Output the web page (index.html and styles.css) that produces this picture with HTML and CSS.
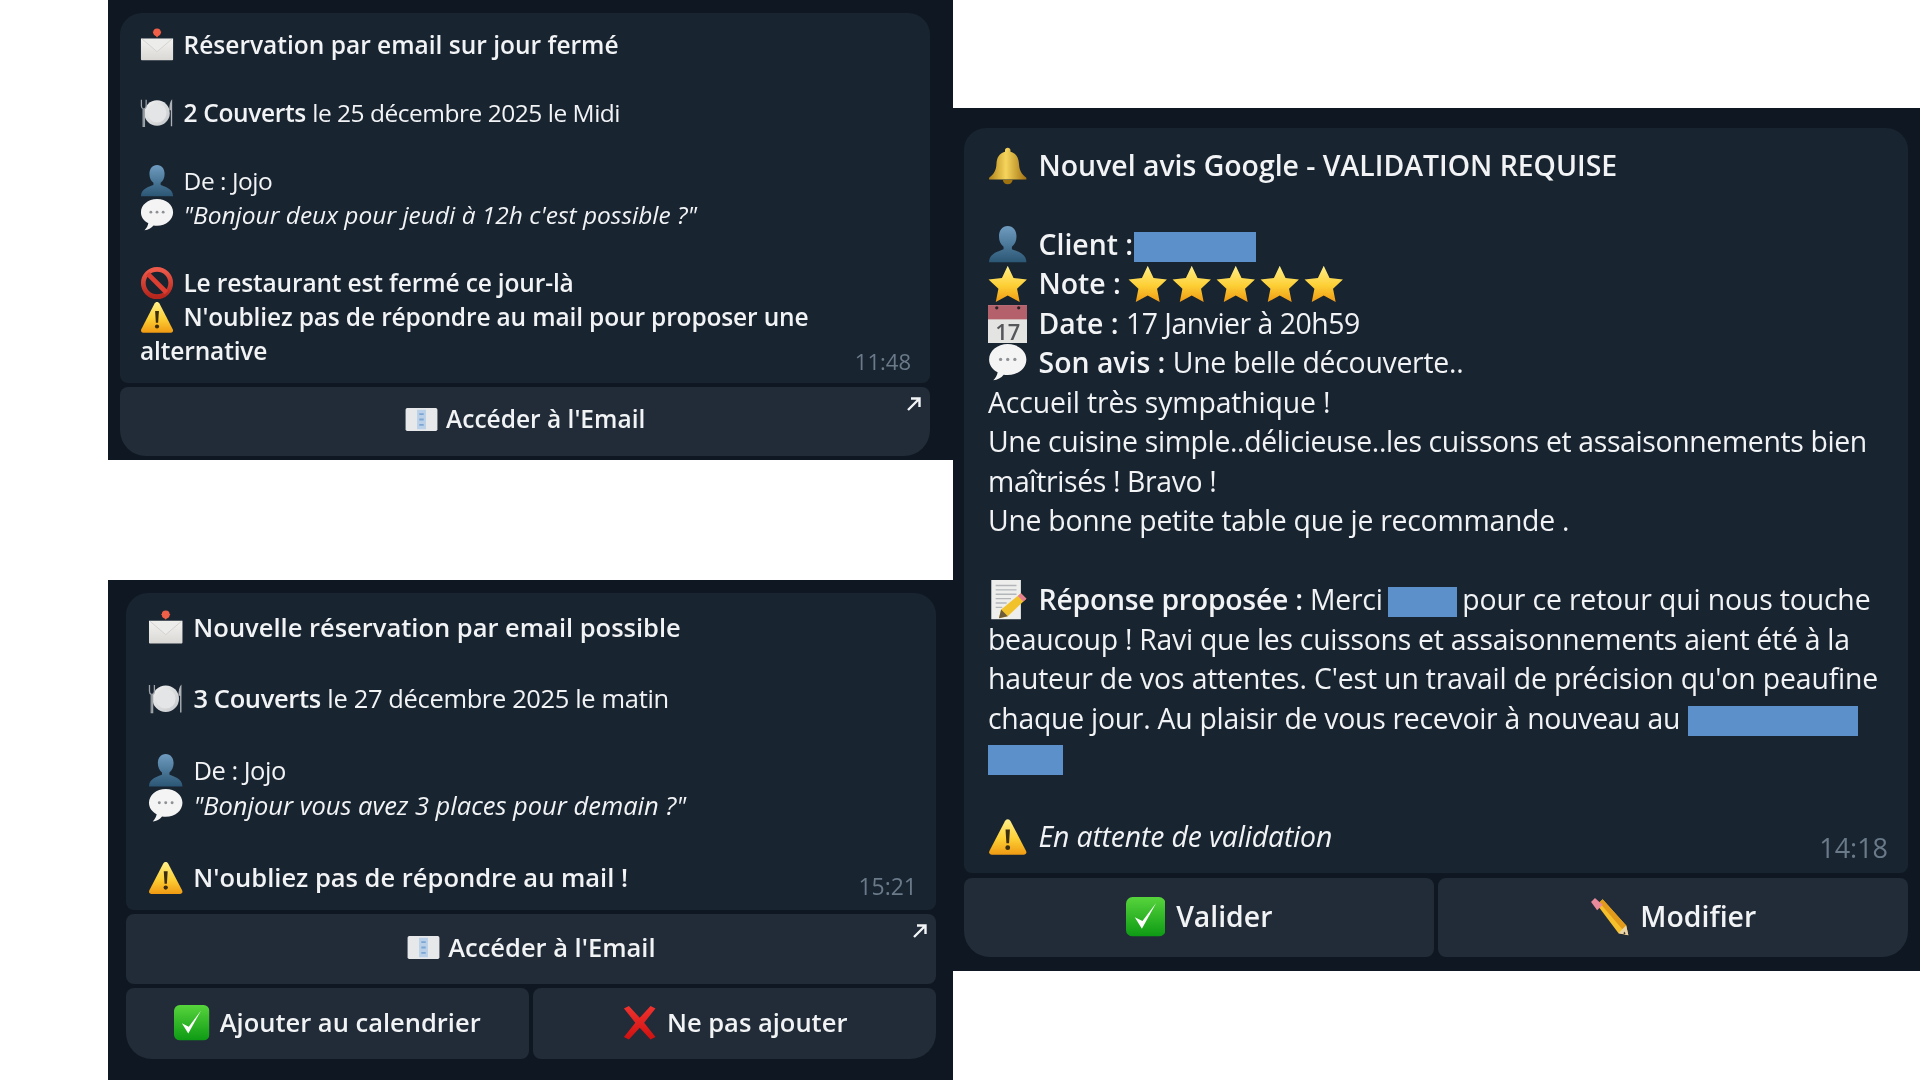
FILE: index.html
```html
<!DOCTYPE html>
<html lang="fr">
<head>
<meta charset="utf-8">
<title>Notifications</title>
<link rel="stylesheet" href="styles.css">
</head>
<body>
<svg class="sprites" width="0" height="0" aria-hidden="true">
  <defs>
    <linearGradient id="gMail" x1="0" y1="0" x2="0" y2="1"><stop offset="0" stop-color="#f3f2f0"/><stop offset="1" stop-color="#d9d8d5"/></linearGradient>
    <linearGradient id="gUser" x1="0" y1="0" x2="0" y2="1"><stop offset="0" stop-color="#6f9cc0"/><stop offset="1" stop-color="#2b5674"/></linearGradient>
    <linearGradient id="gGold" x1="0" y1="0" x2="0" y2="1"><stop offset="0" stop-color="#fff08a"/><stop offset=".55" stop-color="#fdcf35"/><stop offset="1" stop-color="#ef9a12"/></linearGradient>
    <linearGradient id="gBell" x1="0" y1="0" x2="1" y2="0"><stop offset="0" stop-color="#b08218"/><stop offset=".45" stop-color="#f6d55c"/><stop offset="1" stop-color="#a17212"/></linearGradient>
    <linearGradient id="gGreen" x1="0" y1="0" x2="0" y2="1"><stop offset="0" stop-color="#57d43c"/><stop offset="1" stop-color="#0d9a14"/></linearGradient>
    <linearGradient id="gRed" x1="0" y1="0" x2="0" y2="1"><stop offset="0" stop-color="#f0332f"/><stop offset="1" stop-color="#cf1010"/></linearGradient>
    <linearGradient id="gNo" x1="0" y1="0" x2="0" y2="1"><stop offset="0" stop-color="#ee5a4a"/><stop offset="1" stop-color="#b5261d"/></linearGradient>
    <linearGradient id="gPlate" x1="0" y1="0" x2="1" y2="1"><stop offset="0" stop-color="#f2f2f2"/><stop offset="1" stop-color="#c4c7ca"/></linearGradient>

    <symbol id="i-mail" viewBox="0 0 36 36">
      <path d="M1 11h34v22a1 1 0 0 1-1 1H2a1 1 0 0 1-1-1z" fill="url(#gMail)"/>
      <path d="M2 11.500 18 25 34 11.500" fill="#ececea" stroke="#d2d1ce" stroke-width="1"/>
      <path d="M16.500 1h3v3h3.300l-4.800 6L13.200 4h3.300z" fill="#f05f48"/>
      <circle cx="18" cy="4.500" r="4" fill="#f05f48"/>
    </symbol>
    <symbol id="i-plate" viewBox="0 0 36 36">
      <circle cx="18" cy="18" r="13.500" fill="url(#gPlate)"/>
      <circle cx="18" cy="18" r="10" fill="#e4e5e6"/>
      <path d="M1.500 4v6.500c0 1.800 1 2.800 1.800 3V32h1.400V13.500c.8-.3 1.800-1.200 1.800-3V4" fill="none" stroke="#9ea3a8" stroke-width="1.300"/>
      <path d="M34 3.500c-2.200 2-3 6-3 11.500h1.600v17H34z" fill="#aeb2b6"/>
    </symbol>
    <symbol id="i-user" viewBox="0 0 36 36">
      <path d="M18 1c5 0 8 4 8 9.500 0 4-1.600 7.400-4.200 9.300v2.300c3.400 1.600 13.200 3.300 13.200 11.900H1c0-8.600 9.800-10.300 13.200-11.900v-2.300C11.600 17.900 10 14.500 10 10.500 10 5 13 1 18 1z" fill="url(#gUser)"/>
    </symbol>
    <symbol id="i-speech" viewBox="0 0 36 36">
      <path d="M18 1C8.500 1 1 7.300 1 15c0 5 3 9.200 7.800 11.700-.5 2.600-1.800 5.200-4 7.300 3.800-.4 7.200-2.100 9.500-5 1.200.2 2.400.3 3.700.3 9.500 0 17-6.300 17-14.300S27.500 1 18 1z" fill="#f4f4f4"/>
      <circle cx="11.500" cy="15" r="1.500" fill="#8d9094"/><circle cx="18" cy="15" r="1.500" fill="#8d9094"/><circle cx="24.500" cy="15" r="1.500" fill="#8d9094"/>
    </symbol>
    <symbol id="i-no" viewBox="0 0 36 36">
      <circle cx="18" cy="18" r="14.500" fill="none" stroke="url(#gNo)" stroke-width="5"/>
      <path d="M8 8l20 20" stroke="#dc3f32" stroke-width="5"/>
    </symbol>
    <symbol id="i-warn" viewBox="0 0 36 36">
      <path d="M18 2c1.200 0 2 .7 2.600 1.800l14 27c1 2-.2 3.700-2.200 3.700H3.600c-2 0-3.200-1.700-2.200-3.700l14-27C16 2.700 16.800 2 18 2z" fill="url(#gGold)"/>
      <path d="M16 11.500h4l-.8 12.500h-2.400z" fill="#3a2d10"/>
      <circle cx="18" cy="28" r="2.200" fill="#3a2d10"/>
    </symbol>
    <symbol id="i-bell" viewBox="0 0 36 36">
      <path d="M18 1.500c1.400 0 2.500 1 2.500 2.400v1.300c5.500 1.300 7.500 5.600 7.800 11.300.2 5 1.900 9.300 6.700 12.500v1.500H1V29c4.800-3.200 6.500-7.500 6.700-12.500C8 10.800 10 6.500 15.500 5.200V3.900c0-1.400 1.100-2.400 2.500-2.400z" fill="url(#gBell)"/>
      <path d="M13.500 31h9c-.4 2.400-2.200 4-4.500 4s-4.100-1.600-4.500-4z" fill="#a0710f"/>
    </symbol>
    <symbol id="i-star" viewBox="0 0 36 36">
      <path d="M18 1.500l5.300 11.200 12.200 1.500-9 8.400 2.400 12.100L18 28.700 7.100 34.700l2.400-12.100-9-8.400 12.200-1.500z" fill="url(#gGold)"/>
    </symbol>
    <symbol id="i-cal" viewBox="0 0 36 36">
      <rect x="0" y="1" width="36" height="35" fill="#e4e4e2"/>
      <rect x="0" y="1" width="36" height="13" fill="#b5616b"/>
      <circle cx="8" cy="3.500" r="1.500" fill="#2a2325"/><circle cx="28" cy="3.500" r="1.500" fill="#2a2325"/>
      <text class="cal-num" x="18" y="33" text-anchor="middle">17</text>
    </symbol>
    <symbol id="i-memo" viewBox="0 0 36 36">
      <rect x="3" y="0" width="27" height="36" fill="#eeeeec"/>
      <path d="M7 5h19M7 9h19M7 13h19M7 17h14M7 21h10M7 25h6" stroke="#b3b6b9" stroke-width="1.300"/>
      <path d="M30 12l5 5-17 16-8 2 2-8z" fill="#f2c22d"/>
      <path d="M30 12l5 5-2.800 2.700-5-5z" fill="#e67f93"/>
      <path d="M12 27l6 6-8 2z" fill="#6b5b3a"/>
    </symbol>
    <symbol id="i-check" viewBox="0 0 36 36">
      <rect x="0" y="0" width="36" height="36" rx="6" fill="url(#gGreen)"/>
      <path d="M8 18.500l6.500 10.500L27.500 5.500 15 22z" fill="#fff"/>
    </symbol>
    <symbol id="i-cross" viewBox="0 0 36 36">
      <path d="M2 3.500 7 1l11 12L29 1l5 2.500L22.500 18 34 32.500 29 35 18 23 7 35l-5-2.500L13.500 18z" fill="url(#gRed)"/>
    </symbol>
    <symbol id="i-pencil" viewBox="0 0 36 36">
      <path d="M6.500 7l5-5L33 26l2 9-9-2z" fill="#f6c02c"/>
      <path d="M11.500 2 33 26l-3.500 3.500L8.500 5z" fill="#e19a1c"/>
      <path d="M1 4.500 4.500 1l7 6-5 5z" fill="#e88a9b"/>
      <path d="M26 33l3.500-3.500 3.500-3.500 2 9z" fill="#e9d3a8"/>
      <path d="M32.500 33l-1.500-1.500L30.500 35z" fill="#3a3028"/>
    </symbol>
    <symbol id="i-envelope" viewBox="0 0 36 26">
      <rect x="0" y="0" width="36" height="26" rx="2" fill="#e6e8ea"/>
      <rect x="13" y="2" width="10" height="22" fill="#b9d0e8"/>
      <path d="M15.500 7h5M15.500 13h5M15.500 19h5" stroke="#7ea6d2" stroke-width="2"/>
    </symbol>
    <symbol id="i-arrow" viewBox="0 0 16 14">
      <path d="M2 13 13 2M5 1.500h8.500V10" fill="none" stroke="#f2f4f6" stroke-width="2.400"/>
    </symbol>
  </defs>
</svg>

<main class="collage">
  <div class="col-left">
    <section class="panel panel-a">
      <div class="bubble">
        <b><svg class="emoji"><use href="#i-mail"/></svg> Réservation par email sur jour fermé</b><br>
        <br>
        <svg class="emoji"><use href="#i-plate"/></svg> <b class="tight-l">2 Couverts</b> <span class="tight-xl">le 25 décembre 2025 le Midi</span><br>
        <br>
        <svg class="emoji"><use href="#i-user"/></svg> <span class="tight-xl">De : Jojo</span><br>
        <svg class="emoji"><use href="#i-speech"/></svg> <i>"Bonjour deux pour jeudi à 12h c'est possible ?"</i><br>
        <br>
        <b class="tight-s"><svg class="emoji"><use href="#i-no"/></svg> Le restaurant est fermé ce jour-là<br>
        <svg class="emoji"><use href="#i-warn"/></svg> N'oubliez pas de répondre au mail pour proposer une<br>
        alternative</b>
        <span class="time">11:48</span>
      </div>
      <div class="btn-row">
        <a class="btn btn-last"><svg class="emoji-env"><use href="#i-envelope"/></svg> Accéder à l'Email<svg class="corner"><use href="#i-arrow"/></svg></a>
      </div>
    </section>

    <section class="panel panel-b">
      <div class="bubble">
        <b><svg class="emoji"><use href="#i-mail"/></svg> Nouvelle réservation par email possible</b><br>
        <br>
        <svg class="emoji"><use href="#i-plate"/></svg> <b class="tight-l">3 Couverts</b> <span class="tight-l">le 27 décembre 2025 le matin</span><br>
        <br>
        <svg class="emoji"><use href="#i-user"/></svg> <span class="tight-xl">De : Jojo</span><br>
        <svg class="emoji"><use href="#i-speech"/></svg> <i>"Bonjour vous avez 3 places pour demain ?"</i><br>
        <br>
        <b><svg class="emoji"><use href="#i-warn"/></svg> N'oubliez pas de répondre au mail !</b>
        <span class="time">15:21</span>
      </div>
      <div class="btn-row">
        <a class="btn"><svg class="emoji-env"><use href="#i-envelope"/></svg> Accéder à l'Email<svg class="corner"><use href="#i-arrow"/></svg></a>
      </div>
      <div class="btn-row">
        <a class="btn btn-first-bl"><svg class="emoji"><use href="#i-check"/></svg> Ajouter au calendrier</a>
        <a class="btn btn-last-br"><svg class="emoji"><use href="#i-cross"/></svg> Ne pas ajouter</a>
      </div>
    </section>
  </div>

  <section class="panel panel-c">
    <div class="bubble">
      <b><svg class="emoji"><use href="#i-bell"/></svg> Nouvel avis Google - VALIDATION REQUISE</b><br>
      <br>
      <svg class="emoji"><use href="#i-user"/></svg> <b>Client :</b> <span class="redact r-client"></span><br>
      <svg class="emoji"><use href="#i-star"/></svg> <b>Note :</b> <svg class="emoji star"><use href="#i-star"/></svg><svg class="emoji star"><use href="#i-star"/></svg><svg class="emoji star"><use href="#i-star"/></svg><svg class="emoji star"><use href="#i-star"/></svg><svg class="emoji star"><use href="#i-star"/></svg><br>
      <svg class="emoji"><use href="#i-cal"/></svg> <b>Date :</b> <span class="tight-xl">17 Janvier à 20h59</span><br>
      <svg class="emoji"><use href="#i-speech"/></svg> <b>Son avis :</b> <span class="tight-m">Une belle découverte..</span><br>
      <span class="tight-s">Accueil très sympathique !</span><br>
      <span class="tight-l">Une cuisine simple..délicieuse..les cuissons et assaisonnements bien</span><br>
      <span class="tight-l">maîtrisés ! Bravo !</span><br>
      <span class="tight-m">Une bonne petite table que je recommande .</span><br>
      <br>
      <svg class="emoji"><use href="#i-memo"/></svg> <b class="tight-m">Réponse proposée :</b> <span class="tight-m">Merci</span> <span class="redact r-name"></span> <span class="tight-s">pour ce retour qui nous touche</span><br>
      <span class="tight-m">beaucoup ! Ravi que les cuissons et assaisonnements aient été à la</span><br>
      <span class="tight-s">hauteur de vos attentes. C'est un travail de précision qu'on peaufine</span><br>
      <span class="tight-m">chaque jour. Au plaisir de vous recevoir à nouveau au</span> <span class="redact r-place"></span><br>
      <span class="redact r-place2"></span><br>
      <br>
      <svg class="emoji"><use href="#i-warn"/></svg> <i class="tight-s">En attente de validation</i>
      <span class="time">14:18</span>
    </div>
    <div class="btn-row">
      <a class="btn btn-first-bl"><svg class="emoji"><use href="#i-check"/></svg> Valider</a>
      <a class="btn btn-last-br"><svg class="emoji"><use href="#i-pencil"/></svg> Modifier</a>
    </div>
  </section>
</main>
</body>
</html>
```

FILE: styles.css
```css
* { box-sizing: border-box; }

html, body {
  margin: 0;
  height: 100%;
  background: #fff;
  overflow: hidden;
}

.sprites { position: absolute; }

.cal-num {
  font-family: "Open Sans", sans-serif;
  font-size: 20px;
  font-weight: 600;
  fill: #55575a;
}

.collage {
  display: flex;
  align-items: flex-start;
  padding-left: 108px;
  height: 1080px;
  font-family: "Open Sans", "Noto Sans", sans-serif;
  color: #f1f3f5;
}

.col-left {
  width: 845px;
  display: flex;
  flex-direction: column;
  gap: 120px;
}

.panel {
  display: flex;
  flex-direction: column;
  gap: 4px;
  background: #0f1822;
  line-height: 1.39;
}

.panel-a { height: 460px; padding: 13px 23px 0 12px; font-size: 24.5px; }
.panel-b { height: 500px; padding: 13px 17px 0 18px; font-size: 25.5px; line-height: 1.4; }
.panel-c { width: 967px; height: 863px; margin-top: 108px; padding: 20px 12px 0 11px; font-size: 28.4px; gap: 5px; }

.bubble {
  position: relative;
  background: #192431;
  border-radius: 22px 22px 8px 8px;
  padding: 15px 20px;
  white-space: nowrap;
  filter: blur(.4px);
}

.panel-b .bubble { padding: 17px 22px 14px; }
.panel-c .bubble { padding: 18px 24px 16px; }

b { font-weight: 600; }

.tight-s { letter-spacing: -.15px; }
.tight-m { letter-spacing: -.27px; }
.tight-l { letter-spacing: -.36px; }
.tight-xl { letter-spacing: -.48px; }

.emoji {
  display: inline-block;
  width: 1.39em;
  height: 1.39em;
  vertical-align: top;
  margin-right: .13em;
}

.emoji.star { margin-right: .16em; }

.emoji-env {
  display: inline-block;
  width: 33px;
  height: 23px;
  vertical-align: -3px;
  margin-right: 2px;
}

.time {
  position: absolute;
  right: 19px;
  bottom: 7px;
  font-size: .9em;
  color: #6a7a89;
}

.panel-c .time { font-size: .95em; right: 20px; bottom: 6px; }

.btn-row {
  display: flex;
  gap: 4px;
}

.btn {
  position: relative;
  flex: 1;
  height: 2.78em;
  padding-bottom: 2px;
  display: flex;
  align-items: center;
  justify-content: center;
  gap: .26em;
  background: #212c38;
  border-radius: 8px;
  font-weight: 600;
  white-space: nowrap;
  filter: blur(.4px);
}

.panel-c .btn { padding-bottom: 0; }

.btn-last { border-radius: 8px 8px 26px 26px; padding-bottom: 5px; }
.btn-first-bl { border-radius: 8px 8px 8px 26px; }
.btn-last-br { border-radius: 8px 8px 26px 8px; }

.corner {
  position: absolute;
  top: 10px;
  right: 8px;
  width: 16px;
  height: 14px;
}

.redact {
  display: inline-block;
  height: 1.05em;
  vertical-align: -.24em;
  background: #5b90cb;
}

.r-client { width: 122px; margin-left: -7px; }
.r-name { width: 69px; margin: 0 -2px; }
.r-place { width: 170px; }
.r-place2 { width: 75px; }
```
